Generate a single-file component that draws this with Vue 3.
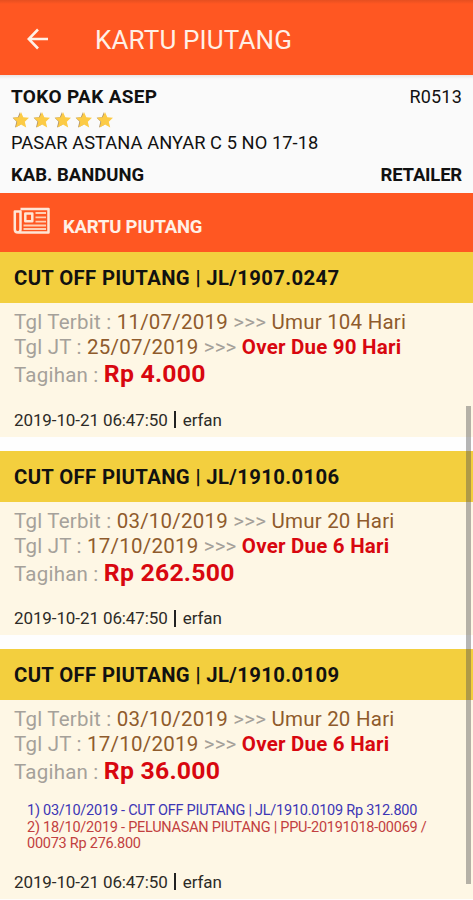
<template>
  <div class="page">
    <header class="appbar">
      <svg class="back" viewBox="0 0 22 22">
        <path d="M21 11H2M11 1.5L1.7 11L11 20.5" />
      </svg>
      <h1>KARTU PIUTANG</h1>
    </header>

    <!-- data toko -->
    <section class="toko">
      <div class="row">
        <b class="nama">{{ toko.nama }}</b>
        <span class="kode">{{ toko.kode }}</span>
      </div>
      <div class="stars">
        <svg v-for="n in toko.rating" :key="n" viewBox="0 0 18 18">
          <path
            class="shade"
            d="M8 1L5.8 6.2L0.6 6.8L4.4 10.6L3 16.6L8.6 13.8Z"
          />
          <path
            class="star"
            d="M9 1L11.3 6.2L17 6.8L12.8 10.7L14.2 16.6L9 13.5L3.8 16.6L5.2 10.7L1 6.8L6.7 6.2Z"
          />
        </svg>
      </div>
      <div class="alamat">{{ toko.alamat }}</div>
      <div class="row kota">
        <b class="kab">{{ toko.kota }}</b>
        <b class="tipe">{{ toko.tipe }}</b>
      </div>
    </section>

    <div class="section-title">
      <svg class="news" viewBox="0 0 38 28">
        <path class="frame" d="M7.5 2H35.5V25.5H5Q1.8 25.5 1.8 22.5V4.5H7.5V22.5Q7.5 25 4.8 25.5" />
        <path class="frame" d="M12.3 6.5H19.3V14.2H12.3Z" />
        <path d="M22.5 6H33M22.5 10.3H33M22.5 14.6H33M10.5 18.5H33M10.5 22H33" />
      </svg>
      <b>KARTU PIUTANG</b>
    </div>

    <!-- daftar piutang -->
    <article v-for="item in piutang" :key="item.nomor" class="card">
      <h2>CUT OFF PIUTANG | {{ item.nomor }}</h2>
      <div class="isi">
        <div class="line terbit">
          Tgl Terbit : <span class="tgl">{{ item.terbit }}</span> &gt;&gt;&gt;
          <span class="umur">Umur {{ item.umur }} Hari</span>
        </div>
        <div class="line jt">
          Tgl JT : <span class="tgl">{{ item.jt }}</span> &gt;&gt;&gt;
          <b>Over Due {{ item.overdue }} Hari</b>
        </div>
        <div class="line tagihan">
          Tagihan : <b>Rp {{ item.tagihan }}</b>
        </div>
        <div v-if="item.detail" class="detail">
          <div v-for="d in item.detail" :key="d.text" :class="d.jenis">
            {{ d.text }}
          </div>
        </div>
        <div class="footer">
          <span class="waktu">2019-10-21 06:47:50</span>
          <i class="sep"></i>
          <span>erfan</span>
        </div>
      </div>
    </article>

    <div class="scrollbar"></div>
  </div>
</template>

<script setup>
const toko = {
  nama: "TOKO PAK ASEP",
  kode: "R0513",
  rating: 5,
  alamat: "PASAR ASTANA ANYAR C 5 NO 17-18",
  kota: "KAB. BANDUNG",
  tipe: "RETAILER",
};

const piutang = [
  {
    nomor: "JL/1907.0247",
    terbit: "11/07/2019",
    umur: 104,
    jt: "25/07/2019",
    overdue: 90,
    tagihan: "4.000",
  },
  {
    nomor: "JL/1910.0106",
    terbit: "03/10/2019",
    umur: 20,
    jt: "17/10/2019",
    overdue: 6,
    tagihan: "262.500",
  },
  {
    nomor: "JL/1910.0109",
    terbit: "03/10/2019",
    umur: 20,
    jt: "17/10/2019",
    overdue: 6,
    tagihan: "36.000",
    detail: [
      {
        jenis: "debit",
        text: "1) 03/10/2019 - CUT OFF PIUTANG | JL/1910.0109 Rp 312.800",
      },
      {
        jenis: "kredit",
        text: "2) 18/10/2019 - PELUNASAN PIUTANG | PPU-20191018-00069 / 00073 Rp 276.800",
      },
    ],
  },
];
</script>

<style>
body {
  background: #fefefe;
}
</style>

<style scoped>
.page {
  position: relative;
  width: 473px;
  height: 900px;
  overflow: hidden;
  background: #fefefe;
  font-family: Roboto, sans-serif;
  color: #111;
  white-space: nowrap;
}

.appbar {
  box-sizing: border-box;
  height: 75px;
  display: flex;
  align-items: center;
  padding: 4px 0 0 27px;
  background: linear-gradient(#e64f20, #ff5722 4px);
}

.back {
  width: 22px;
  height: 22px;
  margin: -2px 46px 0 0;
  fill: none;
  stroke: #fff0e6;
  stroke-width: 2.6;
}

h1 {
  margin: 0;
  font-size: 26px;
  font-weight: 400;
  line-height: 30px;
  letter-spacing: 0.15px;
  color: #fff0e6;
}

.toko {
  box-sizing: border-box;
  height: 118px;
  padding: 11px 11px 0 11px;
  background: linear-gradient(#e9e5e4, #fafafa 4px);
}

.row {
  display: flex;
  justify-content: space-between;
  line-height: 22px;
}

.nama {
  font-size: 19px;
  letter-spacing: 0.35px;
}

.kab,
.tipe {
  font-size: 18.5px;
}

.tipe {
  letter-spacing: -0.2px;
}

.kode {
  font-size: 18px;
  letter-spacing: 0.2px;
}

.stars {
  display: flex;
  gap: 3px;
  padding-left: 1px;
  height: 23px;
  align-items: center;
}

.stars svg {
  width: 18px;
  height: 18px;
}

.star {
  fill: #fccb45;
}

.shade {
  fill: #b0956a;
}

.alamat {
  font-size: 18.3px;
  line-height: 24px;
  letter-spacing: 0.06px;
}

.kota {
  margin-top: 9px;
}

.section-title {
  height: 59.2px;
  display: flex;
  background: #ff5722;
  color: #fff0e6;
}

.section-title b {
  margin: 23px 0 0 12px;
  font-size: 18.5px;
  line-height: 22px;
  letter-spacing: -0.2px;
}

.news {
  width: 38px;
  height: 28px;
  margin: 14px 0 0 13px;
  fill: none;
  stroke: #ffd0b4;
  stroke-width: 1.8;
}

.news .frame {
  stroke: #ffe6d6;
  stroke-width: 2.5;
  stroke-linejoin: round;
}

.card {
  margin-bottom: 13.8px;
}

h2 {
  margin: 0;
  height: 51px;
  padding-left: 14px;
  background: #f3cf3e;
  font-size: 20.3px;
  font-weight: 700;
  line-height: 53px;
  letter-spacing: 0.36px;
}

.isi {
  padding: 7.3px 14px 7px;
  background: #fef7e5;
}

.line {
  font-size: 20.5px;
  line-height: 25px;
  letter-spacing: 0.22px;
  color: #a5a19a;
}

.tgl,
.umur {
  color: #8f5b2c;
}

.line b {
  color: #d8070f;
}

.tagihan {
  line-height: 28px;
}

.tagihan b {
  font-size: 24.8px;
}

.detail {
  margin: 16.8px 0 0 13px;
  width: 405px;
  white-space: normal;
  font-size: 14.5px;
  line-height: 16.5px;
  letter-spacing: -0.25px;
}

.debit {
  color: #3c36b5;
}

.kredit {
  color: #c2403f;
}

.footer {
  margin-top: 20.3px;
  display: flex;
  align-items: center;
  font-size: 17px;
  line-height: 20px;
  letter-spacing: -0.1px;
  color: #2d2b27;
}

.detail + .footer {
  margin-top: 19.3px;
}

.sep {
  width: 2px;
  height: 17px;
  margin: 0 6.5px;
  background: #222;
}

.scrollbar {
  position: absolute;
  top: 406px;
  left: 466px;
  width: 5px;
  height: 478px;
  background: rgba(80, 80, 80, 0.42);
}
</style>
